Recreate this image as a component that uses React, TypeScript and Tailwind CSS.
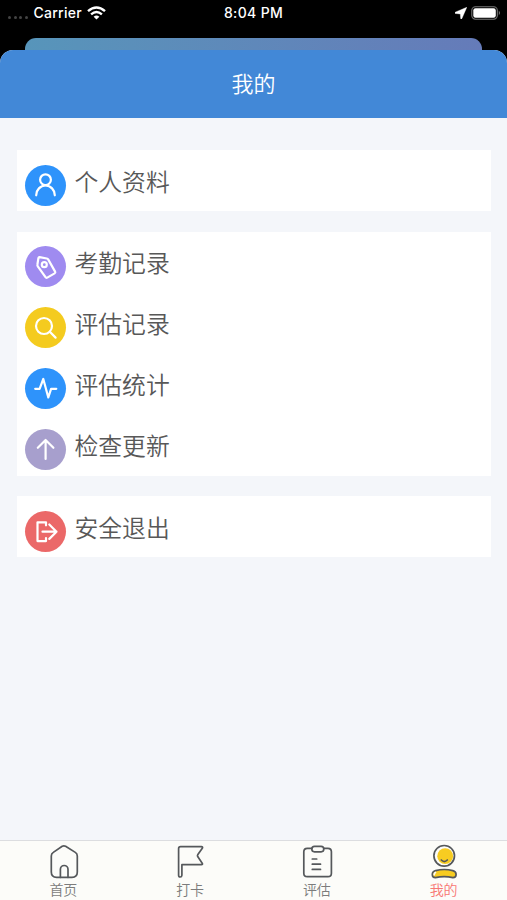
import type { ReactNode } from "react";

interface MenuItem {
  title: string;
  color: string;
  icon: ReactNode;
}

const groups: MenuItem[][] = [
  [
    {
      title: "个人资料",
      color: "bg-[#2e93fb]",
      icon: (
        <>
          <circle cx="20.5" cy="14.7" r="5.4" />
          <path d="M11.2 30.3a9.3 9.8 0 0 1 18.6 0" />
        </>
      ),
    },
  ],
  [
    {
      title: "考勤记录",
      color: "bg-[#9f8bf0]",
      icon: (
        <>
          <path d="M14.6 11.2l7.2 1.3q1 .2 1.5 1.1l6.8 12q.6 1.1-.5 1.8l-7.3 4.2q-1.1.6-1.8-.4l-7.7-10.9q-.6-.8-.4-1.8l1-6.3q.2-1.2 1.2-1z" />
          <circle cx="19.3" cy="18.7" r="2.5" />
        </>
      ),
    },
    {
      title: "评估记录",
      color: "bg-[#f4cb1f]",
      icon: (
        <>
          <circle cx="19" cy="19" r="8" />
          <path d="M24.8 24.8l5.8 5.8" />
        </>
      ),
    },
    {
      title: "评估统计",
      color: "bg-[#2e93fb]",
      icon: <path d="M10.2 20.8h4.4l3.7-9.8 5 18.5 2.8-8.7h5.2" />,
    },
    {
      title: "检查更新",
      color: "bg-[#a79fcd]",
      icon: <path d="M20.6 30V11M12.8 18.8l7.8-7.8 7.8 7.8" />,
    },
  ],
  [
    {
      title: "安全退出",
      color: "bg-[#eb6868]",
      icon: (
        <path d="M21 14.3v-3h-8.5v18.8H21v-3M17.5 20.7h14M24.3 13.5l7.2 7.2-7.2 7.2" />
      ),
    },
  ],
];

const tabs = [
  {
    title: "首页",
    icon: (
      <>
        <path d="M17.2 3.3q1.7-1 3.4 0l9.7 6.1q2 1.3 2 3.6v16q0 5.3-5.3 5.3H11.6q-5.3 0-5.3-5.3V13q0-2.3 2-3.6z" />
        <path d="M15.4 34.3v-8a3.8 3.8 0 0 1 7.6 0v8" />
      </>
    ),
  },
  {
    title: "打卡",
    icon: (
      <path d="M9.9 21.7h19.4q1.8 0 .9-1.5l-4.5-6.6q-.5-.9 0-1.8l4.6-6.5q.9-1.6-.9-1.6H8.6q-2 0-2 2v26.6q0 1.7 1.6 1.7t1.7-1.7z" />
    ),
  },
  {
    title: "评估",
    icon: (
      <>
        <path d="M12.8 5.3H8.3q-3.5 0-3.5 3.5v21.4q0 3.5 3.5 3.5h20.6q3.5 0 3.5-3.5V8.8q0-3.5-3.5-3.5h-4.1" />
        <rect x="12.8" y="3.4" width="12" height="5.4" rx="2.7" />
        <path d="M13.3 16h4.4M13.3 21.2h8.2M13.3 26.4h8.2" />
      </>
    ),
  },
  {
    title: "我的",
    active: true,
    icon: (
      <>
        <circle cx="19.2" cy="13.2" r="7.9" fill="#f7cc21" stroke="none" />
        <circle cx="18.2" cy="12.8" r="10.3" />
        <path d="M15.3 17q3 3 6 0" />
        <path
          d="M9.6 27.6q8.6-2.2 17.2 0q3.3.8 3.3 3.8t-3.2 3.2q-8.7-1.8-17.5 0q-3.1-.2-3.1-3.2t3.3-3.8z"
          fill="#f7cc21"
        />
        <path d="M9.4 29.5q-1.3.8-1.2 2.2" stroke="#fcfcf9" strokeWidth="1.8" />
      </>
    ),
  },
];

function StatusBar() {
  return (
    <div className="flex h-[26px] items-center justify-between pl-2 pr-1.5 font-['Inter','Liberation_Sans',sans-serif] text-[14px] font-medium text-white">
      <div className="flex w-[160px] items-center">
        <div className="mr-1.5 mt-2 flex gap-[2.5px]">
          <i className="size-[3px] rounded-full bg-[#444]" />
          <i className="size-[3px] rounded-full bg-[#444]" />
          <i className="size-[3px] rounded-full bg-[#444]" />
          <i className="size-[3px] rounded-full bg-[#444]" />
        </div>
        <span className="-mt-px tracking-[0.25px]">Carrier</span>
        <svg className="ml-[5px] h-[14px] w-[19px]" viewBox="0 0 19 14" fill="none" stroke="white" strokeWidth="2.4">
          <path d="M1 5.2q8.5-7.6 17 0" />
          <path d="M4.1 8.4q5.4-4.8 10.8 0" />
          <path d="M9.5 13.6L6.6 10.7q2.9-2.3 5.8 0z" fill="white" stroke="none" />
        </svg>
      </div>
      <span className="-ml-0.5 -mt-px tracking-[0.35px]">8:04 PM</span>
      <div className="flex w-[160px] items-center justify-end">
        <svg className="mr-1 h-3 w-3" viewBox="0 0 12 12" fill="white">
          <path d="M11.8.3L.2 5.2q-.8.8.2 1.3l4.9.4.4 4.7q.4 1 1.1.1z" stroke="white" strokeWidth=".4" />
        </svg>
        <svg className="h-[14px] w-[30px]" viewBox="0 0 30 14">
          <rect x=".8" y=".8" width="25.5" height="12.4" rx="3.6" fill="none" stroke="#777" strokeWidth="1.1" />
          <rect x="2.3" y="2.3" width="22.5" height="9.4" rx="2.2" fill="white" />
          <path d="M27.8 4.8q2.4 2.2 0 4.4z" fill="#777" />
        </svg>
      </div>
    </div>
  );
}

function MenuRow({ title, color, icon }: MenuItem) {
  return (
    <div className="flex h-[61px] items-center pl-2">
      <div className={`mt-[9px] size-[41px] rounded-full ${color}`}>
        <svg
          className="size-[41px]"
          viewBox="0 0 41 41"
          fill="none"
          stroke="white"
          strokeWidth="2.2"
          strokeLinecap="round"
          strokeLinejoin="round"
        >
          {icon}
        </svg>
      </div>
      <span className="ml-[9px] text-[23.8px] leading-[60px] text-[#585858]">{title}</span>
    </div>
  );
}

export default function App() {
  return (
    <div className="flex h-[900px] w-[507px] flex-col overflow-hidden bg-black font-['Noto_Sans_CJK_SC',sans-serif] font-[350]">
      <StatusBar />
      <div className="mx-[25px] mt-3 h-3 shrink-0 rounded-t-[11px] bg-linear-to-r from-[#5795ba] to-[#657bb9]" />
      <div className="flex flex-1 flex-col overflow-hidden rounded-t-[13px] bg-[#f4f6fa]">
        <h1 className="flex h-[68.4px] items-center justify-center bg-[#4288d7] pb-1 text-[22px] font-[350] text-white">
          我的
        </h1>
        <div className="flex flex-1 flex-col gap-[20.5px] px-[16.5px] pt-[32px]">
          {groups.map((group) => (
            <div key={group[0].title} className="bg-white">
              {group.map((item) => (
                <MenuRow key={item.title} {...item} />
              ))}
            </div>
          ))}
        </div>
        <nav className="grid h-[60px] grid-cols-4 border-t border-[#dcdde0] bg-[#fcfcf9]">
          {tabs.map((tab) => (
            <div key={tab.title} className="flex flex-col items-center pt-0.5">
              <svg
                className="size-9 shrink-0"
                viewBox="0 0 36 36"
                fill="none"
                stroke="#55585b"
                strokeWidth="1.7"
                strokeLinecap="round"
                strokeLinejoin="round"
              >
                {tab.icon}
              </svg>
              <span
                className={`text-[14px] leading-[21px] ${tab.active ? "text-[#f87874]" : "text-[#7c7c7c]"}`}
              >
                {tab.title}
              </span>
            </div>
          ))}
        </nav>
      </div>
    </div>
  );
}
